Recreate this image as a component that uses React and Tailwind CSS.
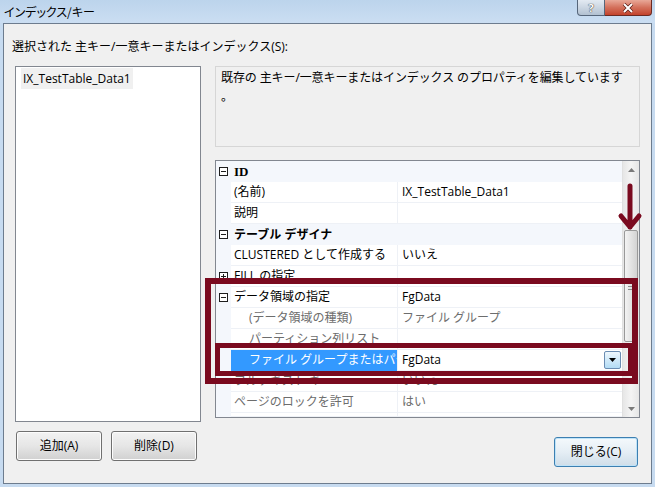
import React from 'react';

const rows = [
  { cat: true, label: 'ID', serif: true },
  { name: '(名前)', value: 'IX_TestTable_Data1' },
  { name: '説明', value: '' },
  { cat: true, label: 'テーブル デザイナ' },
  { name: 'CLUSTERED として作成する', value: 'いいえ' },
  { name: 'FILL の指定', value: '', box: 'plus' },
  { name: 'データ領域の指定', value: 'FgData', box: 'minus' },
  { name: '(データ領域の種類)', value: 'ファイル グループ', indent: true, gray: true },
  { name: 'パーティション列リスト', value: '', indent: true, gray: true },
  { name: 'ファイル グループまたはパーティション構成の名前', value: 'FgData', indent: true, selected: true, dropdown: true },
  { name: 'フルテキスト キー', value: 'いいえ', gray: true },
  { name: 'ページのロックを許可', value: 'はい', gray: true },
  { name: '', value: '' },
];

function ExpandBox({ kind }) {
  return (
    <div className="relative w-[9px] h-[9px] border border-[#1e1e1e] bg-white">
      <div className="absolute left-[1px] top-[3px] w-[5px] h-[1px] bg-[#1e1e1e]" />
      {kind === 'plus' && <div className="absolute left-[3px] top-[1px] w-[1px] h-[5px] bg-[#1e1e1e]" />}
    </div>
  );
}

function Triangle({ dir = 'down', color = '#000' }) {
  return (
    <svg width="7" height="4" viewBox="0 0 7 4">
      {dir === 'down' ? <path d="M0 0h7L3.5 4z" fill={color} /> : <path d="M0 4h7L3.5 0z" fill={color} />}
    </svg>
  );
}

function GridRow({ row }) {
  if (row.cat) {
    return (
      <div className="flex h-[21px] items-center bg-[#f4f7fc]">
        <div className="w-[15px] flex justify-center">
          <ExpandBox kind="minus" />
        </div>
        <span
          className={
            'pl-[3px] font-bold leading-[21px] ' +
            (row.serif ? "font-['Liberation_Serif',serif] text-[13px]" : '')
          }
        >
          {row.label}
        </span>
      </div>
    );
  }
  return (
    <div className="flex h-[21px]">
      <div className="w-[15px] shrink-0 bg-[#f4f7fc] flex items-center justify-center">
        {row.box && <ExpandBox kind={row.box} />}
      </div>
      <div
        className={
          'w-[166px] shrink-0 overflow-hidden whitespace-nowrap leading-[20px] border-b ' +
          (row.selected
            ? 'bg-[#3399ff] text-white border-[#3399ff] '
            : 'bg-white border-[#eef1f6] ') +
          (row.indent ? 'pl-[18px] ' : 'pl-[3px] ') +
          (row.gray ? 'text-[#6d6d6d]' : '')
        }
      >
        {row.name}
      </div>
      <div
        className={
          'flex-1 flex items-start border-l border-b border-[#eef1f6] bg-white pl-[4px] leading-[20px] whitespace-nowrap ' +
          (row.gray ? 'text-[#6d6d6d]' : '')
        }
      >
        <span className="flex-1">{row.value}</span>
        {row.dropdown && (
          <div className="mt-[1px] mr-[1px] w-[17px] h-[18px] rounded-[2px] border border-[#6b8db3] bg-gradient-to-b from-[#eef7fd] to-[#b3dcf5] flex items-center justify-center">
            <Triangle />
          </div>
        )}
      </div>
    </div>
  );
}

function Scrollbar() {
  return (
    <div className="w-[17px] flex flex-col bg-gradient-to-r from-[#e6e6e6] via-[#f4f4f4] to-[#e6e6e6] border-l border-[#e0e0e0]">
      <div className="h-[17px] flex items-center justify-center">
        <Triangle dir="up" color="#7a7a7a" />
      </div>
      <div className="flex-1 flex flex-col">
        <div className="h-[52px]" />
        <div className="h-[112px] mx-[1px] rounded-[2px] border border-[#999999] bg-gradient-to-r from-[#f3f3f3] via-[#e3e3e3] to-[#d3d3d3] flex flex-col items-center justify-center gap-[2px]">
          <div className="w-[7px] h-[1px] bg-[#8a8a8a]" />
          <div className="w-[7px] h-[1px] bg-[#8a8a8a]" />
          <div className="w-[7px] h-[1px] bg-[#8a8a8a]" />
        </div>
      </div>
      <div className="h-[17px] flex items-center justify-center">
        <Triangle color="#7a7a7a" />
      </div>
    </div>
  );
}

function WinButton({ children, className = '' }) {
  return (
    <div
      className={
        'h-[30px] rounded-[3px] border border-[#707070] bg-gradient-to-b from-[#f2f2f2] via-[#e6e6e6] to-[#d0d0d0] flex items-center justify-center shadow-[inset_0_0_0_1px_#fcfcfc] ' +
        className
      }
    >
      {children}
    </div>
  );
}

export default function App() {
  return (
    <div className="relative w-[655px] h-[487px] overflow-hidden bg-[#c7dbf0] flex flex-col font-['Open_Sans','Noto_Sans_CJK_JP',sans-serif] text-[12px] text-black">
      {/* title bar */}
      <div className="h-[23px] shrink-0 flex items-start justify-between bg-gradient-to-b from-[#bcd4ec] to-[#cbdef2]">
        <span className="pl-[4px] pt-[4px] leading-[16px] font-['Noto_Sans_CJK_JP',sans-serif] [font-feature-settings:'palt']">
          インデックス/キー
        </span>
        <div className="flex mr-[3px]">
          <div className="w-[28px] h-[16px] rounded-bl-[4px] border border-t-0 border-[#56667a] bg-gradient-to-b from-[#e3eaf2] via-[#cbd6e2] to-[#b2c1d1] flex items-center justify-center">
            <span className="text-[11px] leading-[14px] font-bold text-white [text-shadow:0_0_1px_#333,0_0_1px_#333]">?</span>
          </div>
          <div className="w-[47px] h-[16px] rounded-br-[4px] border border-t-0 border-l-0 border-[#6b2a22] bg-gradient-to-b from-[#e8a898] via-[#d3705b] to-[#c3422b] flex items-center justify-center">
            <svg width="12" height="10" viewBox="0 0 12 10">
              <path d="M2 1l8 8M10 1L2 9" stroke="#5a1a12" strokeWidth="3.4" />
              <path d="M2 1l8 8M10 1L2 9" stroke="#fff" strokeWidth="2" />
            </svg>
          </div>
        </div>
      </div>

      {/* client area */}
      <div className="mx-[3px] mb-[3px] flex-1 border border-[#6d7c8e] bg-[#f0f0f0] flex flex-col">
        <div className="pl-[8px] pt-[15px] h-[32px] leading-[16px]">選択された 主キー/一意キーまたはインデックス(S):</div>

        <div className="flex pl-[11px] mt-[10px] gap-[14px]">
          {/* left column */}
          <div className="w-[186px] flex flex-col">
            <div className="h-[356px] border border-[#828790] bg-white pl-[5px] pt-[1px]">
              <span className="inline-block h-[21px] leading-[21px] px-[2px] bg-[#f0f0f0]">IX_TestTable_Data1</span>
            </div>
            <div className="flex gap-[9px] mt-[9px] ml-[1px]">
              <WinButton className="w-[86px]">追加(A)</WinButton>
              <WinButton className="w-[86px]">削除(D)</WinButton>
            </div>
          </div>

          {/* right column */}
          <div className="w-[425px] flex flex-col">
            <div className="h-[81px] border border-[#d6d6d6] bg-[#f0f0f0] pl-[5px] pt-[1px] leading-[19px] whitespace-nowrap tracking-[-0.1px]">
              <div>既存の 主キー/一意キーまたはインデックス のプロパティを編集しています</div>
              <div>。</div>
            </div>
            <div className="mt-[13px] h-[258px] border border-[#828790] bg-white flex overflow-hidden">
              <div className="w-[406px] flex flex-col overflow-hidden">
                {rows.map((r, i) => (
                  <GridRow key={i} row={r} />
                ))}
              </div>
              <Scrollbar />
            </div>
            <div className="flex justify-end pr-[2px] mt-[19px]">
              <div className="w-[84px] h-[30px] rounded-[3px] border border-[#3c7fb1] bg-gradient-to-b from-[#f4f9fc] via-[#e5eef5] to-[#cfdde8] shadow-[inset_0_0_0_1px_#bfe3f8] flex items-center justify-center">
                閉じる(C)
              </div>
            </div>
          </div>
        </div>
      </div>

      {/* annotations */}
      <div className="absolute left-[205px] top-[278px] w-[433px] h-[106px] border-[6px] border-[#7a0a1f]" />
      <div className="absolute left-[215px] top-[343px] w-[418px] h-[33px] border-[5px] border-[#7a0a1f]" />
      <svg className="absolute left-[616px] top-[183px]" width="28" height="50" viewBox="0 0 28 50">
        <path d="M14 3v41M5 33l9 11 9-11" fill="none" stroke="#7a0a1f" strokeWidth="5" strokeLinecap="round" strokeLinejoin="round" />
      </svg>
    </div>
  );
}
